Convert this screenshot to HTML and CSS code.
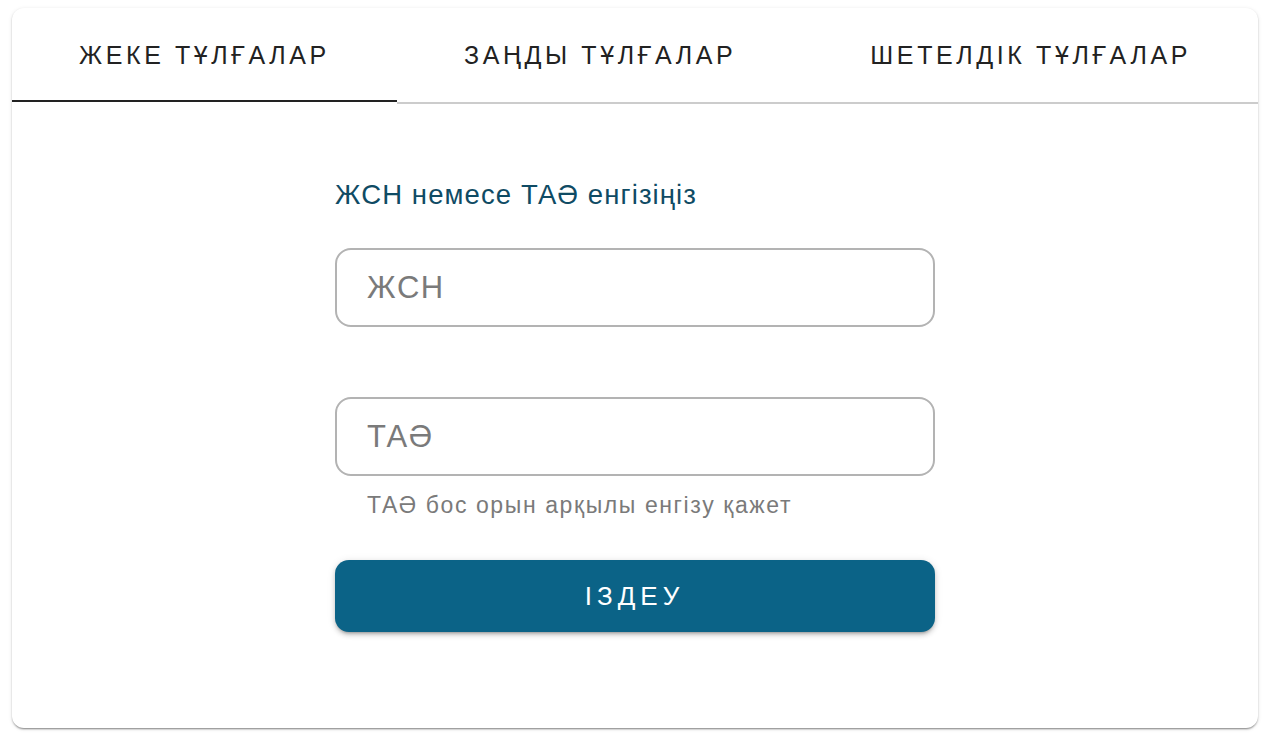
FILE: index.html
```html
<!DOCTYPE html>
<html lang="kk">
<head>
<meta charset="utf-8">
<title>Іздеу</title>
<link rel="stylesheet" href="styles.css">
</head>
<body>
<div class="card">
  <div class="tabs">
    <div class="tab active">ЖЕКЕ ТҰЛҒАЛАР</div>
    <div class="tab">ЗАҢДЫ ТҰЛҒАЛАР</div>
    <div class="tab">ШЕТЕЛДІК ТҰЛҒАЛАР</div>
  </div>
  <div class="content">
    <form class="form">
      <div class="label">ЖСН немесе ТАӘ енгізіңіз</div>
      <input class="field" type="text" placeholder="ЖСН">
      <input class="field field-second" type="text" placeholder="ТАӘ">
      <div class="helper">ТАӘ бос орын арқылы енгізу қажет</div>
      <button class="btn" type="button">ІЗДЕУ</button>
    </form>
  </div>
</div>
</body>
</html>
```

FILE: styles.css
```css
html, body {
  margin: 0;
  height: 100%;
  background: #fff;
}
body {
  box-sizing: border-box;
  padding: 8px 10px 10px 12px;
  font-family: "Liberation Sans", Arial, sans-serif;
  display: flex;
}
.card {
  flex: 1;
  background: #fff;
  border-radius: 12px;
  box-shadow: 0 2px 2px -1px rgba(0,0,0,0.35), 0 1px 2px rgba(0,0,0,0.14), 0 1px 4px rgba(0,0,0,0.10);
  overflow: hidden;
  display: flex;
  flex-direction: column;
}
.tabs {
  display: flex;
}
.tab {
  flex: 1 1 auto;
  height: 94px;
  display: flex;
  align-items: center;
  justify-content: center;
  font-size: 25px;
  letter-spacing: 3.6px;
  color: #222;
  border-bottom: 2px solid #cccccc;
  white-space: nowrap;
}
.tab.active {
  border-bottom-color: #fff;
  box-shadow: inset 0 -2px 0 #222;
}
.content {
  flex: 1;
  display: flex;
  justify-content: center;
}
.form {
  width: 600px;
  display: flex;
  flex-direction: column;
  padding-top: 75px;
  margin: 0;
}
.label {
  color: #0f4b64;
  font-size: 27.5px;
  letter-spacing: 1.1px;
  line-height: 32px;
  margin-bottom: 37px;
}
.field {
  box-sizing: border-box;
  width: 100%;
  height: 79px;
  border: 2px solid #b3b3b3;
  border-radius: 16px;
  padding: 0 30px;
  font-family: "Liberation Sans", Arial, sans-serif;
  font-size: 31px;
  letter-spacing: 1.6px;
  color: #333;
  outline: none;
  background: #fff;
}
.field::placeholder {
  color: #7a7a7a;
}
.field-second {
  margin-top: 70px;
}
.helper {
  color: #7a7a7a;
  font-size: 23px;
  letter-spacing: 1.6px;
  line-height: 26px;
  padding-left: 32px;
  margin-top: 16px;
}
.btn {
  margin-top: 42px;
  height: 72px;
  border: none;
  border-radius: 14px;
  background: #0b6387;
  color: #fff;
  font-family: "Liberation Sans", Arial, sans-serif;
  font-size: 26px;
  letter-spacing: 5px;
  padding-left: 5px;
  box-shadow: 0 3px 3px -2px rgba(0,0,0,0.25), 0 3px 5px rgba(0,0,0,0.16), 0 1px 8px rgba(0,0,0,0.10);
  cursor: pointer;
}
```
